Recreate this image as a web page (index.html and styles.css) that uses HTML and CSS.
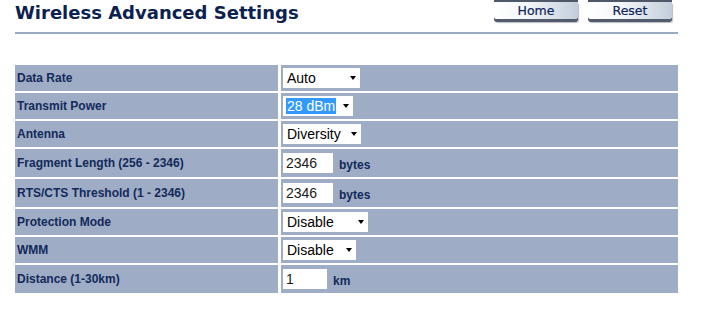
FILE: index.html
```html
<!DOCTYPE html>
<html>
<head>
<meta charset="utf-8">
<link rel="stylesheet" href="styles.css">
</head>
<body>
<div class="page">
  <div class="header">
    <h1 class="title">Wireless Advanced Settings</h1>
    <div class="buttons">
      <button class="btn">Home</button>
      <button class="btn">Reset</button>
    </div>
  </div>
  <div class="rule"></div>
  <div class="settings">
    <div class="label">Data Rate</div>
    <div class="value"><span class="sel w77"><select><option>Auto</option></select></span></div>

    <div class="label">Transmit Power</div>
    <div class="value"><span class="sel w70"><select class="focused"><option>28 dBm</option></select></span></div>

    <div class="label">Antenna</div>
    <div class="value"><span class="sel w78"><select><option>Diversity</option></select></span></div>

    <div class="label tall">Fragment Length (256 - 2346)</div>
    <div class="value tall"><input class="txt w50" type="text" value="2346"><span class="unit">bytes</span></div>

    <div class="label tall">RTS/CTS Threshold (1 - 2346)</div>
    <div class="value tall"><input class="txt w50" type="text" value="2346"><span class="unit">bytes</span></div>

    <div class="label">Protection Mode</div>
    <div class="value"><span class="sel w85"><select><option>Disable</option></select></span></div>

    <div class="label">WMM</div>
    <div class="value"><span class="sel w73"><select><option>Disable</option></select></span></div>

    <div class="label tall">Distance (1-30km)</div>
    <div class="value tall"><input class="txt w44" type="text" value="1"><span class="unit">km</span></div>
  </div>
</div>
</body>
</html>
```

FILE: styles.css
```css
html, body {
  margin: 0;
  padding: 0;
  background: #ffffff;
}

.page {
  width: 663px;
  margin-left: 15px;
  font-family: "Liberation Sans", Arial, sans-serif;
}

.header {
  display: flex;
  justify-content: space-between;
  align-items: flex-start;
  height: 32px;
}

.title {
  margin: 0;
  padding-top: 1px;
  font-family: "DejaVu Sans", Verdana, sans-serif;
  font-weight: bold;
  font-size: 18px;
  line-height: 24px;
  color: #0c2150;
}

.buttons {
  display: flex;
  gap: 10px;
  margin-right: 6px;
}

.btn {
  width: 84px;
  height: 19px;
  padding: 0;
  margin: 0;
  border: none;
  border-top: 2px solid #4f5868;
  border-radius: 0 0 3px 3px;
  background: linear-gradient(to right, #ffffff 0%, #f4f6f9 40%, #c3cddb 100%);
  box-shadow: 0 3px 0 #535c6c, 1px 4px 1px rgba(80, 90, 105, 0.4);
  font-family: "DejaVu Sans", Verdana, sans-serif;
  font-size: 12.5px;
  line-height: 16px;
  color: #0f2557;
  text-align: center;
  -webkit-text-stroke: 0.2px #0f2557;
}

.rule {
  height: 2px;
  background: #9aaac3;
}

.settings {
  display: grid;
  grid-template-columns: 263px 397px;
  column-gap: 3px;
  row-gap: 2px;
  margin-top: 31px;
}

.label,
.value {
  background: #9eadc5;
  display: flex;
  align-items: center;
  height: 26px;
}

.label.tall,
.value.tall {
  height: 28px;
}

.label {
  padding-left: 2px;
  font-weight: bold;
  font-size: 12px;
  color: #13295a;
}

.value {
  padding-left: 2px;
}

.sel {
  position: relative;
  display: inline-block;
  height: 20px;
}

.sel::after {
  content: "";
  position: absolute;
  right: 4px;
  top: 8px;
  border-left: 3.5px solid transparent;
  border-right: 3.5px solid transparent;
  border-top: 4px solid #000000;
  pointer-events: none;
}

.sel select {
  -webkit-appearance: none;
  appearance: none;
  width: 100%;
  height: 20px;
  margin: 0;
  padding: 0 0 0 4px;
  border: none;
  border-radius: 0;
  background: #ffffff;
  font-family: "Liberation Sans", Arial, sans-serif;
  font-size: 14px;
  color: #000000;
  outline: none;
}

.sel select.focused {
  color: #ffffff;
  background: linear-gradient(#3399ff, #3399ff) no-repeat 3px 2px / 50px 16px, #ffffff;
}

.w70 { width: 70px; }
.w73 { width: 73px; }
.w77 { width: 77px; }
.w78 { width: 78px; }
.w85 { width: 85px; }
.w50 { width: 50px; }
.w44 { width: 44px; }

.txt {
  box-sizing: border-box;
  height: 20px;
  margin: 0;
  padding: 0 0 0 3px;
  border: none;
  background: #ffffff;
  font-family: "Liberation Sans", Arial, sans-serif;
  font-size: 14px;
  color: #1a1a1a;
  outline: none;
}

.unit {
  margin-left: 6px;
  padding-top: 4px;
  font-weight: bold;
  font-size: 12px;
  color: #13295a;
}
```
